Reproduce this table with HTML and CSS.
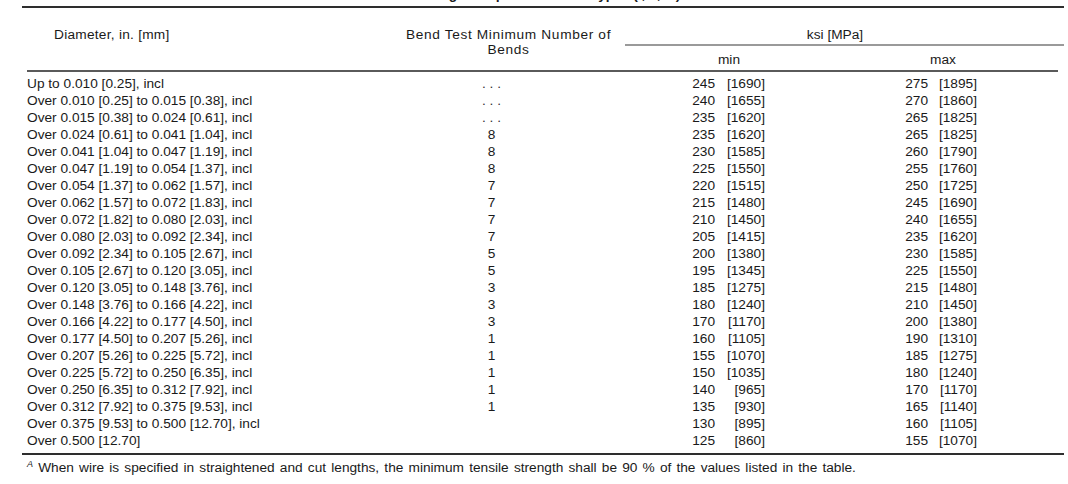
FILE: index.html
```html
<!DOCTYPE html>
<html lang="en">
<head>
<meta charset="utf-8">
<title>Tensile Strength Requirements</title>
<link rel="stylesheet" href="styles.css">
</head>
<body>
<div class="sheet">
  <div class="title">TABLE 2 Tensile Strength Requirements for Types (I, II, III)<sup>A</sup></div>
  <div class="rule-thick"></div>
  <div class="head">
    <div class="h-diam">Diameter, in. [mm]</div>
    <div class="h-bend">Bend Test Minimum Number of<br>Bends</div>
    <div class="h-ksi">ksi [MPa]</div>
    <div class="h-min">min</div>
    <div class="h-max">max</div>
  </div>
  <div class="rule-head"></div>
  <div class="body">
    <div class="row"><div class="c-diam">Up to 0.010 [0.25], incl</div><div class="c-bend dots">. . .</div><div class="c-min"><span>245</span><span>[1690]</span></div><div class="c-max"><span>275</span><span>[1895]</span></div></div>
    <div class="row"><div class="c-diam">Over 0.010 [0.25] to 0.015 [0.38], incl</div><div class="c-bend dots">. . .</div><div class="c-min"><span>240</span><span>[1655]</span></div><div class="c-max"><span>270</span><span>[1860]</span></div></div>
    <div class="row"><div class="c-diam">Over 0.015 [0.38] to 0.024 [0.61], incl</div><div class="c-bend dots">. . .</div><div class="c-min"><span>235</span><span>[1620]</span></div><div class="c-max"><span>265</span><span>[1825]</span></div></div>
    <div class="row"><div class="c-diam">Over 0.024 [0.61] to 0.041 [1.04], incl</div><div class="c-bend">8</div><div class="c-min"><span>235</span><span>[1620]</span></div><div class="c-max"><span>265</span><span>[1825]</span></div></div>
    <div class="row"><div class="c-diam">Over 0.041 [1.04] to 0.047 [1.19], incl</div><div class="c-bend">8</div><div class="c-min"><span>230</span><span>[1585]</span></div><div class="c-max"><span>260</span><span>[1790]</span></div></div>
    <div class="row"><div class="c-diam">Over 0.047 [1.19] to 0.054 [1.37], incl</div><div class="c-bend">8</div><div class="c-min"><span>225</span><span>[1550]</span></div><div class="c-max"><span>255</span><span>[1760]</span></div></div>
    <div class="row"><div class="c-diam">Over 0.054 [1.37] to 0.062 [1.57], incl</div><div class="c-bend">7</div><div class="c-min"><span>220</span><span>[1515]</span></div><div class="c-max"><span>250</span><span>[1725]</span></div></div>
    <div class="row"><div class="c-diam">Over 0.062 [1.57] to 0.072 [1.83], incl</div><div class="c-bend">7</div><div class="c-min"><span>215</span><span>[1480]</span></div><div class="c-max"><span>245</span><span>[1690]</span></div></div>
    <div class="row"><div class="c-diam">Over 0.072 [1.82] to 0.080 [2.03], incl</div><div class="c-bend">7</div><div class="c-min"><span>210</span><span>[1450]</span></div><div class="c-max"><span>240</span><span>[1655]</span></div></div>
    <div class="row"><div class="c-diam">Over 0.080 [2.03] to 0.092 [2.34], incl</div><div class="c-bend">7</div><div class="c-min"><span>205</span><span>[1415]</span></div><div class="c-max"><span>235</span><span>[1620]</span></div></div>
    <div class="row"><div class="c-diam">Over 0.092 [2.34] to 0.105 [2.67], incl</div><div class="c-bend">5</div><div class="c-min"><span>200</span><span>[1380]</span></div><div class="c-max"><span>230</span><span>[1585]</span></div></div>
    <div class="row"><div class="c-diam">Over 0.105 [2.67] to 0.120 [3.05], incl</div><div class="c-bend">5</div><div class="c-min"><span>195</span><span>[1345]</span></div><div class="c-max"><span>225</span><span>[1550]</span></div></div>
    <div class="row"><div class="c-diam">Over 0.120 [3.05] to 0.148 [3.76], incl</div><div class="c-bend">3</div><div class="c-min"><span>185</span><span>[1275]</span></div><div class="c-max"><span>215</span><span>[1480]</span></div></div>
    <div class="row"><div class="c-diam">Over 0.148 [3.76] to 0.166 [4.22], incl</div><div class="c-bend">3</div><div class="c-min"><span>180</span><span>[1240]</span></div><div class="c-max"><span>210</span><span>[1450]</span></div></div>
    <div class="row"><div class="c-diam">Over 0.166 [4.22] to 0.177 [4.50], incl</div><div class="c-bend">3</div><div class="c-min"><span>170</span><span>[1170]</span></div><div class="c-max"><span>200</span><span>[1380]</span></div></div>
    <div class="row"><div class="c-diam">Over 0.177 [4.50] to 0.207 [5.26], incl</div><div class="c-bend">1</div><div class="c-min"><span>160</span><span>[1105]</span></div><div class="c-max"><span>190</span><span>[1310]</span></div></div>
    <div class="row"><div class="c-diam">Over 0.207 [5.26] to 0.225 [5.72], incl</div><div class="c-bend">1</div><div class="c-min"><span>155</span><span>[1070]</span></div><div class="c-max"><span>185</span><span>[1275]</span></div></div>
    <div class="row"><div class="c-diam">Over 0.225 [5.72] to 0.250 [6.35], incl</div><div class="c-bend">1</div><div class="c-min"><span>150</span><span>[1035]</span></div><div class="c-max"><span>180</span><span>[1240]</span></div></div>
    <div class="row"><div class="c-diam">Over 0.250 [6.35] to 0.312 [7.92], incl</div><div class="c-bend">1</div><div class="c-min"><span>140</span><span>[965]</span></div><div class="c-max"><span>170</span><span>[1170]</span></div></div>
    <div class="row"><div class="c-diam">Over 0.312 [7.92] to 0.375 [9.53], incl</div><div class="c-bend">1</div><div class="c-min"><span>135</span><span>[930]</span></div><div class="c-max"><span>165</span><span>[1140]</span></div></div>
    <div class="row"><div class="c-diam">Over 0.375 [9.53] to 0.500 [12.70], incl</div><div class="c-bend"></div><div class="c-min"><span>130</span><span>[895]</span></div><div class="c-max"><span>160</span><span>[1105]</span></div></div>
    <div class="row"><div class="c-diam">Over 0.500 [12.70]</div><div class="c-bend"></div><div class="c-min"><span>125</span><span>[860]</span></div><div class="c-max"><span>155</span><span>[1070]</span></div></div>
  </div>
  <div class="rule-thick rule-bottom"></div>
  <div class="note"><sup>A</sup> When wire is specified in straightened and cut lengths, the minimum tensile strength shall be 90 % of the values listed in the table.</div>
</div>
</body>
</html>
```

FILE: styles.css
```css
html, body {
  margin: 0;
  padding: 0;
  background: #ffffff;
}

body {
  font-family: "Liberation Sans", Arial, sans-serif;
  font-size: 13.7px;
  color: #1a1a1a;
  overflow: hidden;
}

.sheet {
  width: 1042px;
  margin-left: 22px;
}

.title {
  margin-top: -16px;
  margin-bottom: 8px;
  height: 14px;
  line-height: 14px;
  font-weight: bold;
  text-align: center;
  white-space: nowrap;
  padding-right: 96px;
}

.title sup {
  font-size: 8px;
  font-style: italic;
}

.rule-thick {
  height: 2px;
  background: #2e2e2e;
}

.head {
  display: grid;
  grid-template-columns: 348px 243px 220px 231px;
  grid-template-rows: auto auto;
  padding-top: 19px;
  padding-bottom: 3px;
  line-height: 15px;
}

.h-diam {
  grid-column: 1;
  grid-row: 1 / 3;
  padding-left: 32px;
  letter-spacing: 0.25px;
}

.h-bend {
  grid-column: 2;
  grid-row: 1 / 3;
  text-align: center;
  padding-left: 14px;
  margin-right: -20px;
  letter-spacing: 0.65px;
}

.h-ksi {
  grid-column: 3 / 5;
  grid-row: 1;
  margin-left: 12px;
  padding-right: 19px;
  padding-bottom: 2px;
  border-bottom: 2px solid #9a9a9a;
  text-align: center;
}

.h-min {
  grid-column: 3;
  grid-row: 2;
  padding-top: 6px;
  padding-left: 12px;
  text-align: center;
}

.h-max {
  grid-column: 4;
  grid-row: 2;
  padding-top: 6px;
  padding-right: 11px;
  text-align: center;
}

.rule-head {
  height: 2px;
  margin: 0 6px 0 5px;
  background: #5a5a5a;
}

.body {
  padding-top: 3px;
  padding-bottom: 4px;
}

.row {
  display: grid;
  grid-template-columns: 348px 243px 220px 231px;
  height: 17px;
  line-height: 17px;
  white-space: nowrap;
}

.c-diam {
  padding-left: 5px;
}

.c-bend {
  text-align: center;
}

.dots {
  color: #333;
}

.c-min {
  display: grid;
  grid-template-columns: 102px 50px;
  text-align: right;
}

.c-max {
  display: grid;
  grid-template-columns: 95px 49px;
  text-align: right;
}

.note {
  margin-top: 4px;
  padding-left: 5px;
  line-height: 17px;
  white-space: nowrap;
  word-spacing: 1.35px;
}

.note sup {
  font-size: 9px;
  font-style: italic;
  vertical-align: 5px;
  line-height: 0;
  word-spacing: 0;
}
```
